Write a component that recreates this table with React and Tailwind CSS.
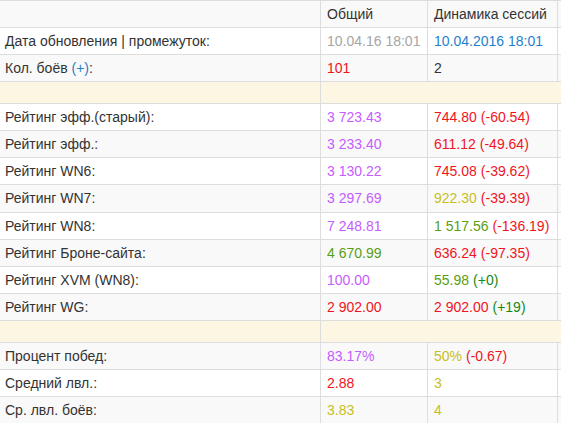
import React from 'react';

const RED = 'text-[#f0141e]';
const PURPLE = 'text-[#c65cff]';
const OLIVE = 'text-[#5a9e12]';
const GREEN = 'text-[#158a15]';
const YELLOW = 'text-[#c8bf1e]';
const BLUE = 'text-[#1f7fce]';
const GRAY = 'text-[#a6a6a6]';

const ratings = [
  ['Рейтинг эфф.(старый):', [PURPLE, '3 723.43'], [[RED, '744.80'], [RED, '(-60.54)']]],
  ['Рейтинг эфф.:', [PURPLE, '3 233.40'], [[RED, '611.12'], [RED, '(-49.64)']]],
  ['Рейтинг WN6:', [PURPLE, '3 130.22'], [[RED, '745.08'], [RED, '(-39.62)']]],
  ['Рейтинг WN7:', [PURPLE, '3 297.69'], [[YELLOW, '922.30'], [RED, '(-39.39)']]],
  ['Рейтинг WN8:', [PURPLE, '7 248.81'], [[OLIVE, '1 517.56'], [RED, '(-136.19)']]],
  ['Рейтинг Броне-сайта:', [OLIVE, '4 670.99'], [[RED, '636.24'], [RED, '(-97.35)']]],
  ['Рейтинг XVM (WN8):', [PURPLE, '100.00'], [[OLIVE, '55.98'], [GREEN, '(+0)']]],
  ['Рейтинг WG:', [RED, '2 902.00'], [[RED, '2 902.00'], [GREEN, '(+19)']]],
];

const bottom = [
  ['Процент побед:', [PURPLE, '83.17%'], [[YELLOW, '50%'], [RED, '(-0.67)']]],
  ['Средний лвл.:', [RED, '2.88'], [[YELLOW, '3']]],
  ['Ср. лвл. боёв:', [YELLOW, '3.83'], [[YELLOW, '4']]],
];

function Row({ striped, h = 'h-[27.2px]', children }) {
  return (
    <div className={`flex ${h} border-b border-[#dddddd] ${striped ? 'bg-[#f9f9f9]' : 'bg-white'}`}>
      {children}
    </div>
  );
}

function Cell({ w, children, last }) {
  return (
    <div className={`${w} shrink-0 flex items-center pl-[6px] ${last ? '' : 'border-r border-[#dddddd]'}`}>
      {children}
    </div>
  );
}

function StatRow({ item, striped }) {
  const [label, total, dyn] = item;
  return (
    <Row striped={striped}>
      <Cell w="w-[321px]"><span className="pl-[-1px] -ml-px">{label}</span></Cell>
      <Cell w="w-[107px]"><span className={total[0]}>{total[1]}</span></Cell>
      <Cell w="w-[130px]">
        {dyn.map((d, i) => (
          <span key={i} className={`${d[0]} ${i > 0 ? 'ml-[4px]' : ''}`}>{d[1]}</span>
        ))}
      </Cell>
      <Cell w="w-[40px]" last />
    </Row>
  );
}

function Spacer() {
  return (
    <div className="flex h-[21.7px] border-b border-[#dddddd] bg-[#fdf6e3]">
      <div className="w-[321px] shrink-0 border-r border-[#dddddd]" />
      <div className="flex-1" />
    </div>
  );
}

export default function App() {
  return (
    <div className="w-[561px] h-[423px] overflow-hidden bg-white text-[14px] leading-[20px] text-[#333333] font-['Liberation_Sans',Arial,sans-serif]">
      <div className="w-[600px] border-t border-[#dddddd]">
        <Row striped h="h-[26.7px]">
          <Cell w="w-[321px]" />
          <Cell w="w-[107px]">Общий</Cell>
          <Cell w="w-[130px]">Динамика сессий</Cell>
          <Cell w="w-[40px]" last />
        </Row>
        <Row>
          <Cell w="w-[321px]"><span className="-ml-px">Дата обновления | промежуток:</span></Cell>
          <Cell w="w-[107px]"><span className={GRAY}>10.04.16 18:01</span></Cell>
          <Cell w="w-[130px]"><span className={BLUE}>10.04.2016 18:01</span></Cell>
          <Cell w="w-[40px]" last />
        </Row>
        <Row striped>
          <Cell w="w-[321px]">
            <span className="-ml-px">Кол. боёв <span className={BLUE}>(+)</span>:</span>
          </Cell>
          <Cell w="w-[107px]"><span className={RED}>101</span></Cell>
          <Cell w="w-[130px]">2</Cell>
          <Cell w="w-[40px]" last />
        </Row>
        <Spacer />
        {ratings.map((r, i) => (
          <StatRow key={r[0]} item={r} striped={i % 2 === 1} />
        ))}
        <Spacer />
        {bottom.map((r, i) => (
          <StatRow key={r[0]} item={r} striped={i % 2 === 0} />
        ))}
      </div>
    </div>
  );
}
